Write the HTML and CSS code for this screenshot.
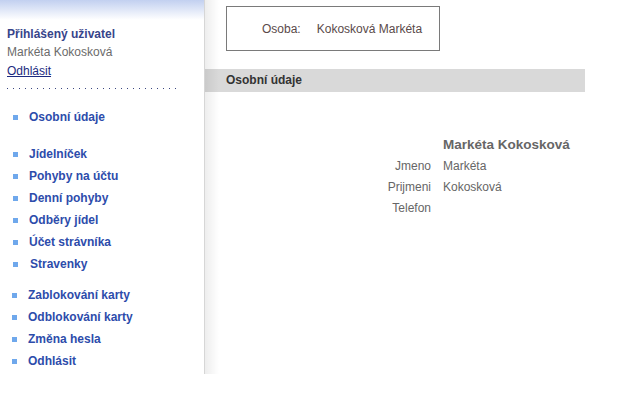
FILE: index.html
```html
<!DOCTYPE html>
<html lang="cs">

<head>
  <meta charset="UTF-8" />
  <title>Osobní údaje</title>
  <link rel="stylesheet" href="styles.css">
</head>

<body>
  <div class="page">
    <div class="sidebar">
      <div class="user">
        <div class="user-title">Přihlášený uživatel</div>
        <div class="user-name">Markéta Kokosková</div>
        <a class="user-logout" href="#">Odhlásit</a>
      </div>
      <div class="dots"></div>

      <ul class="menu">
        <li><a href="#">Osobní údaje</a></li>
      </ul>
      <ul class="menu">
        <li><a href="#">Jídelníček</a></li>
        <li><a href="#">Pohyby na účtu</a></li>
        <li><a href="#">Denní pohyby</a></li>
        <li><a href="#">Odběry jídel</a></li>
        <li><a href="#">Účet strávníka</a></li>
        <li class="shifted"><a href="#">Stravenky</a></li>
      </ul>
      <ul class="menu menu-last">
        <li><a href="#">Zablokování karty</a></li>
        <li><a href="#">Odblokování karty</a></li>
        <li><a href="#">Změna hesla</a></li>
        <li><a href="#">Odhlásit</a></li>
      </ul>
    </div>

    <div class="main">
      <div class="person-box">
        <span class="person-label">Osoba:</span>
        <span class="person-value">Kokosková Markéta</span>
      </div>

      <div class="section-bar">Osobní údaje</div>

      <table class="details">
        <tr>
          <td></td>
          <td class="full-name">Markéta Kokosková</td>
        </tr>
        <tr>
          <td class="label">Jmeno</td>
          <td>Markéta</td>
        </tr>
        <tr>
          <td class="label">Prijmeni</td>
          <td>Kokosková</td>
        </tr>
        <tr>
          <td class="label">Telefon</td>
          <td></td>
        </tr>
      </table>
    </div>
  </div>
</body>

</html>
```

FILE: styles.css
```css
/* Global */
* {
  box-sizing: border-box;
  margin: 0;
  padding: 0;
}

body {
  background: #ffffff;
  font-family: "Liberation Sans", Arial, sans-serif;
  font-size: 12px;
  color: #555555;
}

.page {
  display: flex;
  align-items: flex-start;
}

/* Sidebar */
.sidebar {
  position: relative;
  z-index: 1;
  width: 205px;
  height: 374px;
  flex-shrink: 0;
  background: linear-gradient(#c2d0f0 0, #ffffff 20px);
  border-right: 1px solid #d6d6d6;
  padding: 25px 0 0 7px;
}

.sidebar::after {
  content: "";
  position: absolute;
  top: 0;
  right: -15px;
  width: 14px;
  height: 100%;
  background: linear-gradient(to right, rgba(0, 0, 0, 0.07), rgba(0, 0, 0, 0));
}

.user {
  line-height: 18px;
}

.user-title {
  font-weight: bold;
  color: #37448a;
}

.user-name {
  color: #6b6b6b;
}

.user-logout {
  display: inline-block;
  margin-top: 1px;
  color: #1c2a80;
}

.dots {
  width: 172px;
  height: 1px;
  margin-top: 8px;
  background: repeating-linear-gradient(to right, #3a4680 0, #3a4680 1px, transparent 1px, transparent 6px);
}

.menu {
  list-style: none;
  margin-top: 17px;
}

.menu + .menu {
  margin-top: 15px;
}

.menu-last {
  margin-top: 9px !important;
}

.menu li {
  display: flex;
  align-items: center;
  height: 22px;
  padding-left: 6px;
}

.menu li::before {
  content: "";
  width: 5px;
  height: 5px;
  margin-right: 11px;
  background: #6fa8ec;
}

.menu-last li {
  padding-left: 5px;
}

.menu li.shifted a {
  margin-left: 1px;
}

.menu a {
  color: #2d4cab;
  font-weight: bold;
  text-decoration: none;
}

/* Main */
.main {
  width: 380px;
}

.person-box {
  display: flex;
  align-items: center;
  width: 214px;
  height: 45px;
  margin: 6px 0 18px 21px;
  padding-left: 35px;
  border: 1px solid #7a7a7a;
  color: #5a4a4a;
  font-size: 12px;
}

.person-label {
  margin-right: 16px;
}

.section-bar {
  height: 23px;
  line-height: 23px;
  padding-left: 21px;
  background: #d9d9d9;
  color: #333333;
  font-weight: bold;
}

.details {
  margin: 42px 0 0 165px;
  border-collapse: collapse;
}

.details td {
  height: 21px;
  padding: 0 6px;
  color: #666666;
  vertical-align: middle;
}

.details .label {
  text-align: right;
  width: 67px;
}

.details .full-name {
  font-weight: bold;
  font-size: 13.5px;
}
```
